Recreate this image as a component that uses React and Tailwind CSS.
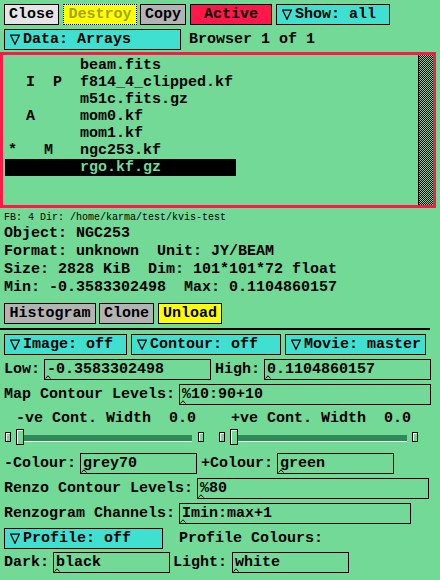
import React from 'react';

const rows = [
  { text: '        beam.fits' },
  { text: '  I  P  f814_4_clipped.kf' },
  { text: '        m51c.fits.gz' },
  { text: '  A     mom0.kf' },
  { text: '        mom1.kf' },
  { text: '*   M   ngc253.kf' },
  { text: '        rgo.kf.gz', selected: true },
];

function Btn({ cls, children }) {
  return (
    <div className={`flex items-center justify-center h-[21px] border border-black ${cls}`}>
      {children}
    </div>
  );
}

function OptionMenu({ cls, label }) {
  return (
    <div className={`flex items-center border border-black bg-[#40e0d0] pl-[5px] whitespace-pre ${cls}`}>
      <svg width="10" height="11" viewBox="0 0 10 11" className="shrink-0">
        <path d="M0.7 1.2 H9.3 L5 10.2 Z" fill="none" stroke="black" strokeWidth="1.3" strokeLinejoin="miter" />
      </svg>
      <span className="ml-[3px]">{label}</span>
    </div>
  );
}

function Field({ cls, value }) {
  return (
    <div className={`relative h-[21px] border border-black pl-[2px] leading-[19px] whitespace-pre ${cls}`}>
      {value}
      <svg width="6" height="4" viewBox="0 0 6 4" className="absolute left-0 bottom-0">
        <path d="M0.5 3.5 L3 0.8 L5.5 3.5" fill="none" stroke="black" strokeWidth="1" />
      </svg>
    </div>
  );
}

function Nub({ cls }) {
  return <div className={`w-[6px] h-[10px] border border-black shadow-[inset_1px_1px_0_#ffffff] ${cls}`} />;
}

function Slider({ cls, troughW, endGap }) {
  return (
    <div className={`flex items-center h-[16px] ${cls}`}>
      <Nub cls="" />
      <div className="ml-[5px] w-[8px] h-[16px] border border-black shadow-[inset_1px_1px_0_#ffffff]" />
      <div className={`h-[7px] mt-[3px] bg-[#2e8b57] border-b border-white ${troughW}`} />
      <Nub cls={endGap} />
    </div>
  );
}

export default function App() {
  return (
    <div className="w-[440px] h-[580px] overflow-hidden bg-[#72d996] text-black font-['Liberation_Mono',monospace] font-bold text-[15px] leading-none">
      {/* top buttons */}
      <div className="flex pt-[4px] pl-[4px]">
        <Btn cls="w-[55px] bg-[#e5e5e5]">Close</Btn>
        <Btn cls="ml-[4px] w-[74px] bg-[#ffff00] border-dotted text-[#a3a32a]">Destroy</Btn>
        <Btn cls="ml-[3px] w-[46px] bg-[#b3b3b3]">Copy</Btn>
        <Btn cls="ml-[4px] w-[82px] bg-[#ff1848]">Active</Btn>
        <OptionMenu cls="ml-[4px] w-[114px] h-[21px]" label="Show: all" />
      </div>

      <div className="flex items-center mt-[4px] pl-[4px]">
        <OptionMenu cls="w-[177px] h-[21px]" label="Data: Arrays" />
        <span className="ml-[8px] whitespace-pre">Browser 1 of 1</span>
      </div>

      {/* file browser list */}
      <div className="mt-[2px] flex w-[436px] h-[156px] border-[3px] border-[#ff1848]">
        <div className="flex-1 pt-[2px]">
          {rows.map((r) => (
            <div
              key={r.text}
              className={`ml-[2px] w-[231px] h-[17px] pl-[3px] leading-[17px] whitespace-pre ${
                r.selected ? 'bg-black text-[#72d996]' : ''
              }`}
            >
              {r.text}
            </div>
          ))}
        </div>
        <div className="w-[1px] bg-black" />
        <div className="w-[14px] bg-[image:repeating-conic-gradient(#000000_0%_25%,#72d996_0%_50%)] bg-[length:2px_2px]" />
      </div>

      {/* info */}
      <div className="mt-[2px] h-[15px] pl-[4px] font-normal text-[10px] leading-[15px] whitespace-pre">
        FB: 4 Dir: /home/karma/test/kvis-test
      </div>
      <div className="pl-[4px] whitespace-pre leading-[18px]">
        <div className="h-[18px]">Object: NGC253</div>
        <div className="h-[18px]">Format: unknown  Unit: JY/BEAM</div>
        <div className="h-[18px]">Size: 2828 KiB  Dim: 101*101*72 float</div>
        <div className="h-[18px]">Min: -0.3583302498  Max: 0.1104860157</div>
      </div>

      <div className="flex mt-[6px] pl-[4px]">
        <Btn cls="w-[92px] bg-[#b3b3b3]">Histogram</Btn>
        <Btn cls="ml-[3px] w-[55px] bg-[#b3b3b3]">Clone</Btn>
        <Btn cls="ml-[4px] w-[64px] bg-[#ffff00]">Unload</Btn>
      </div>

      <div className="mt-[4px] w-[430px] h-[2px] bg-black" />

      {/* display controls */}
      <div className="flex mt-[4px] pl-[4px]">
        <OptionMenu cls="w-[123px] h-[21px]" label="Image: off" />
        <OptionMenu cls="ml-[4px] w-[150px] h-[21px]" label="Contour: off" />
        <OptionMenu cls="ml-[4px] w-[141px] h-[21px]" label="Movie: master" />
      </div>

      <div className="flex items-center mt-[4px] pl-[4px]">
        <span>Low:</span>
        <Field cls="ml-[4px] w-[167px]" value="-0.3583302498" />
        <span className="ml-[4px]">High:</span>
        <Field cls="ml-[4px] w-[167px]" value="0.1104860157" />
      </div>

      <div className="flex items-center mt-[4px] pl-[4px]">
        <span>Map Contour Levels:</span>
        <Field cls="ml-[4px] w-[252px]" value="%10:90+10" />
      </div>

      <div className="flex items-center mt-[3px] h-[20px] whitespace-pre">
        <span className="ml-[16px]">-ve Cont. Width  0.0</span>
        <span className="ml-[35px]">+ve Cont. Width  0.0</span>
      </div>

      <div className="flex mt-[1px] pl-[5px]">
        <Slider cls="" troughW="w-[168px]" endGap="ml-[6px]" />
        <Slider cls="ml-[15px]" troughW="w-[169px]" endGap="ml-[5px]" />
      </div>

      <div className="flex items-center mt-[8px] pl-[4px]">
        <span>-Colour:</span>
        <Field cls="ml-[4px] w-[117px]" value="grey70" />
        <span className="ml-[4px]">+Colour:</span>
        <Field cls="ml-[4px] w-[117px]" value="green" />
      </div>

      <div className="flex items-center mt-[4px] pl-[4px]">
        <span>Renzo Contour Levels:</span>
        <Field cls="ml-[4px] w-[232px]" value="%80" />
      </div>

      <div className="flex items-center mt-[4px] pl-[4px]">
        <span>Renzogram Channels:</span>
        <Field cls="ml-[4px] w-[232px]" value="Imin:max+1" />
      </div>

      <div className="flex items-center mt-[4px] pl-[4px]">
        <OptionMenu cls="w-[159px] h-[21px]" label="Profile: off" />
        <span className="ml-[16px]">Profile Colours:</span>
      </div>

      <div className="flex items-center mt-[3px] pl-[4px]">
        <span>Dark:</span>
        <Field cls="ml-[4px] w-[117px]" value="black" />
        <span className="ml-[3px]">Light:</span>
        <Field cls="ml-[5px] w-[117px]" value="white" />
      </div>
    </div>
  );
}
